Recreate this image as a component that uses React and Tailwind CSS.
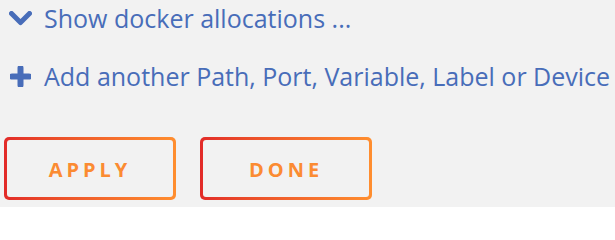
import React from "react";

function GradientButton({ label }) {
  return (
    <button
      type="button"
      className="rounded-[5px] bg-gradient-to-r from-[#e22a28] to-[#ff8e2f] p-[3px] w-[172px] h-[63px]"
    >
      <span className="flex h-full w-full items-center justify-center rounded-[3px] bg-[#f2f2f2] text-[20px] font-bold tracking-[4px] text-[#fb8b32] pt-[3px]">
        {label}
      </span>
    </button>
  );
}

export default function App() {
  return (
    <div
      className="w-[615px] h-[207px] bg-[#f2f2f2] text-[#486db9] overflow-hidden"
      style={{ fontFamily: '"Open Sans", "Noto Sans", sans-serif' }}
    >
      <div className="flex items-center h-[36px] pl-[9px]">
        <svg width="23" height="15" viewBox="0 0 23 15" className="mr-[12px]">
          <path d="M2.5 2.5 L11.5 11.5 L20.5 2.5" fill="none" stroke="#486db9" strokeWidth="5" strokeLinecap="round" strokeLinejoin="round" />
        </svg>
        <span className="text-[25px] leading-none whitespace-nowrap">Show docker allocations ...</span>
      </div>

      <div className="flex items-center h-[36px] pl-[10px] mt-[22px]">
        <svg width="21" height="21" viewBox="0 0 21 21" className="mr-[13px]">
          <path d="M10.5 2 V19 M2 10.5 H19" fill="none" stroke="#486db9" strokeWidth="6" strokeLinecap="round" />
        </svg>
        <span className="text-[25px] leading-none whitespace-nowrap">Add another Path, Port, Variable, Label or Device</span>
      </div>

      <div className="flex gap-[24px] pl-[4px] mt-[43px]">
        <GradientButton label="APPLY" />
        <GradientButton label="DONE" />
      </div>
    </div>
  );
}
